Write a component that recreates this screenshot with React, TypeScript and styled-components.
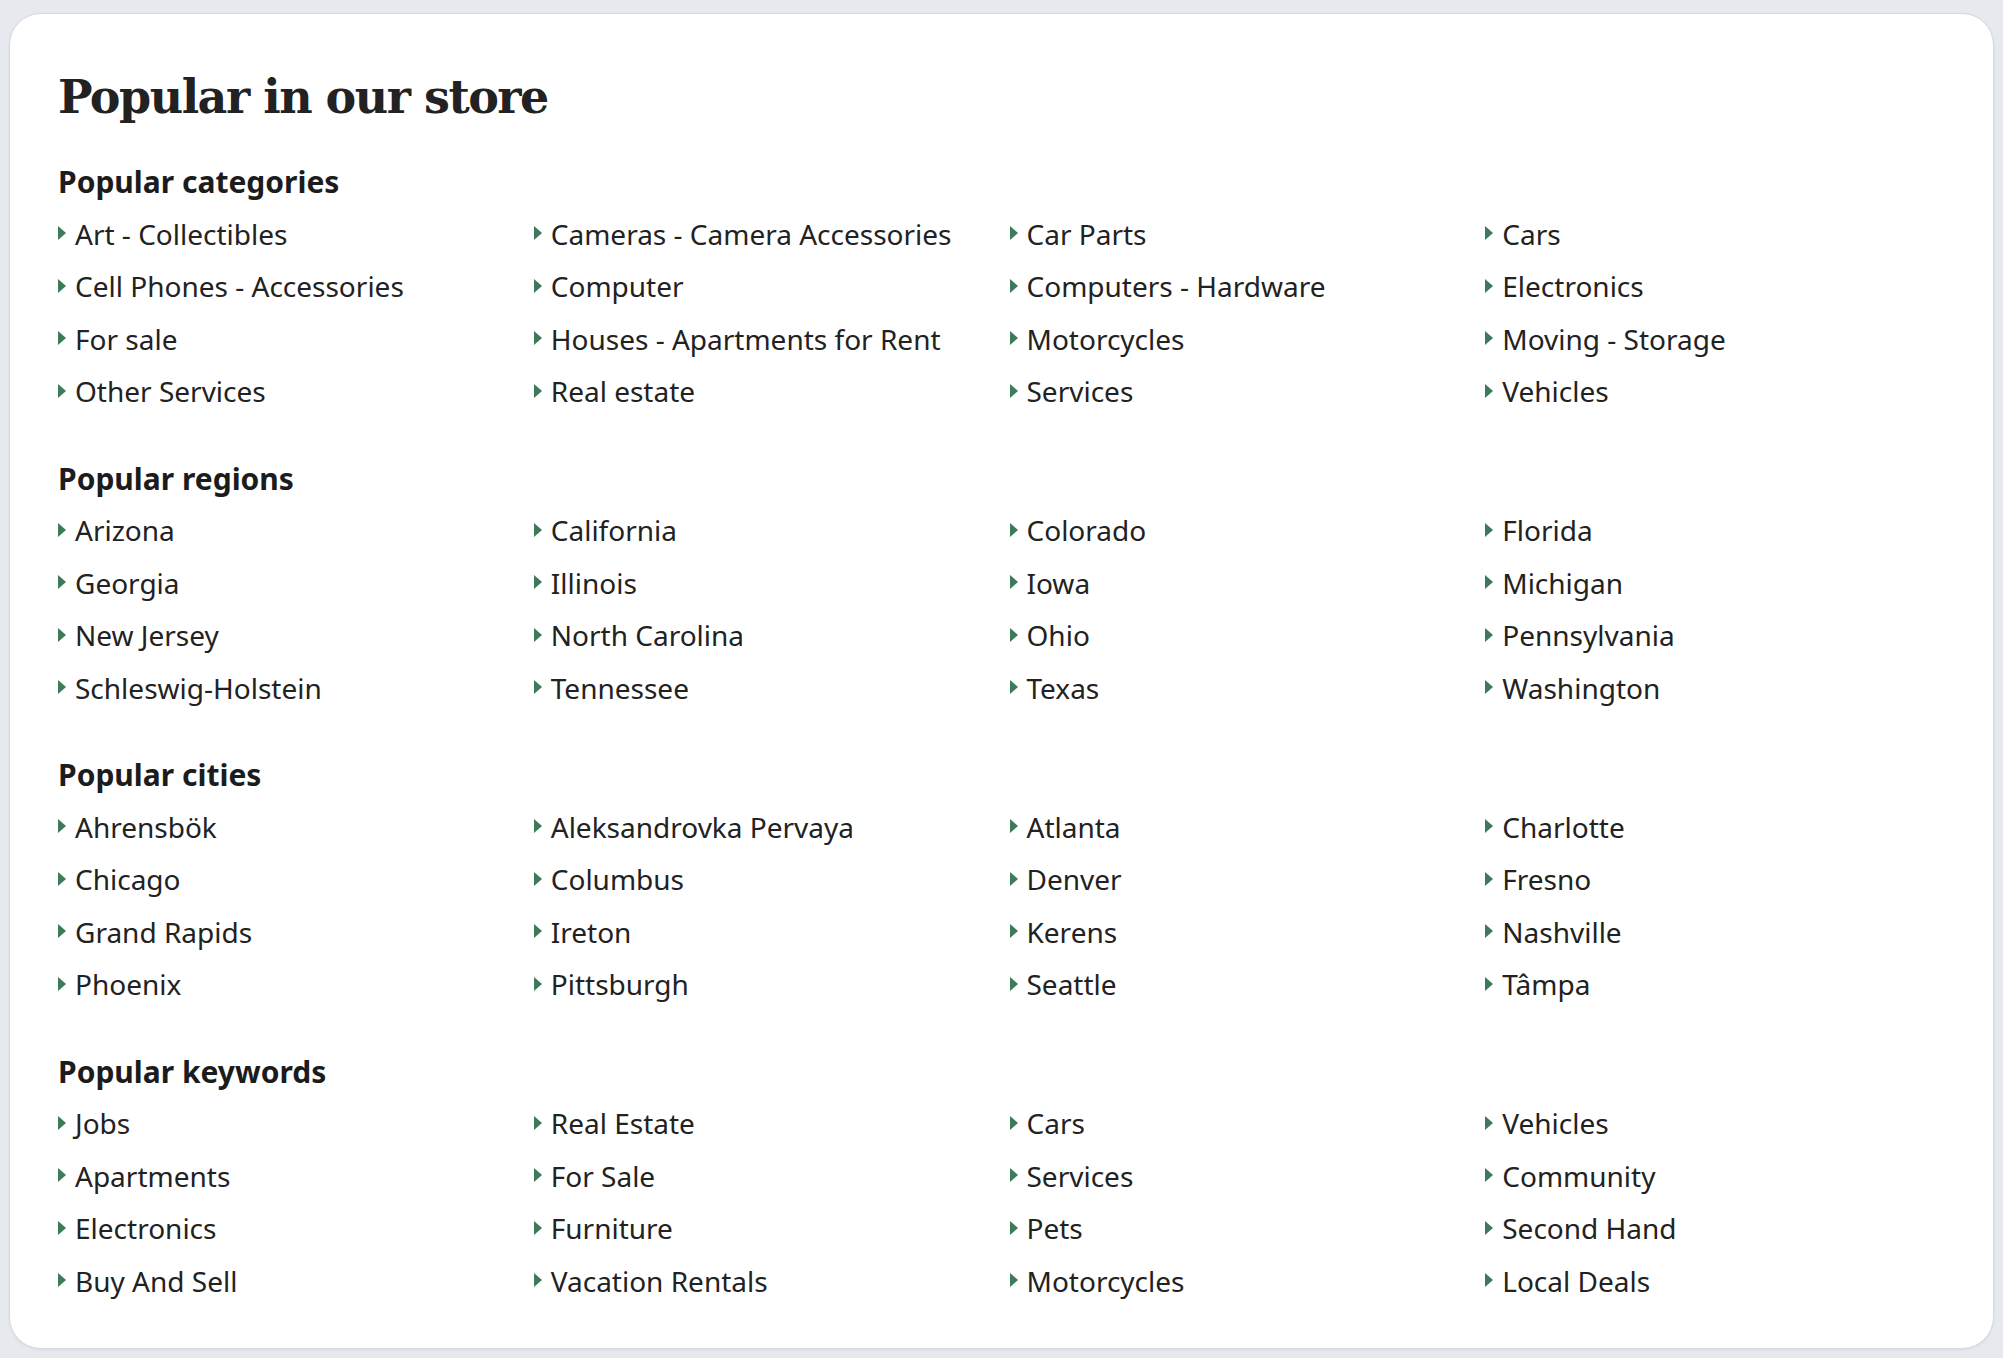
import React from 'react';
import styled, { createGlobalStyle } from 'styled-components';

type GroupType = {
  title: string;
  links: string[];
};

const GROUPS: GroupType[] = [
  {
    title: 'Popular categories',
    links: [
      'Art - Collectibles',
      'Cameras - Camera Accessories',
      'Car Parts',
      'Cars',
      'Cell Phones - Accessories',
      'Computer',
      'Computers - Hardware',
      'Electronics',
      'For sale',
      'Houses - Apartments for Rent',
      'Motorcycles',
      'Moving - Storage',
      'Other Services',
      'Real estate',
      'Services',
      'Vehicles'
    ]
  },
  {
    title: 'Popular regions',
    links: [
      'Arizona',
      'California',
      'Colorado',
      'Florida',
      'Georgia',
      'Illinois',
      'Iowa',
      'Michigan',
      'New Jersey',
      'North Carolina',
      'Ohio',
      'Pennsylvania',
      'Schleswig-Holstein',
      'Tennessee',
      'Texas',
      'Washington'
    ]
  },
  {
    title: 'Popular cities',
    links: [
      'Ahrensbök',
      'Aleksandrovka Pervaya',
      'Atlanta',
      'Charlotte',
      'Chicago',
      'Columbus',
      'Denver',
      'Fresno',
      'Grand Rapids',
      'Ireton',
      'Kerens',
      'Nashville',
      'Phoenix',
      'Pittsburgh',
      'Seattle',
      'Tâmpa'
    ]
  },
  {
    title: 'Popular keywords',
    links: [
      'Jobs',
      'Real Estate',
      'Cars',
      'Vehicles',
      'Apartments',
      'For Sale',
      'Services',
      'Community',
      'Electronics',
      'Furniture',
      'Pets',
      'Second Hand',
      'Buy And Sell',
      'Vacation Rentals',
      'Motorcycles',
      'Local Deals'
    ]
  }
];

const GlobalStyle = createGlobalStyle`
  html, body {
    margin: 0;
    background: #e6e9ee;
  }
  body {
    font-family: 'Noto Sans', 'Open Sans', sans-serif;
    color: #222;
  }
`;

const StyledPage = styled.div`
  padding: 13px 9px 10px 9px;
`;

const StyledCard = styled.section`
  background: #fff;
  border: 1px solid #d6d9de;
  border-radius: 32px;
  box-shadow: 0 1px 3px rgba(0, 0, 0, 0.06);
  padding: 53px 48px 41px;
`;

const StyledTitle = styled.h1`
  font-family: 'DejaVu Serif', 'Liberation Serif', serif;
  font-weight: 700;
  font-size: 46px;
  letter-spacing: -1.5px;
  line-height: 60px;
  color: #222;
  margin: 0 0 35px;
`;

const StyledGroup = styled.div`
  & + & {
    margin-top: 41px;
  }
`;

const StyledHeading = styled.h2`
  font-size: 30px;
  font-weight: 700;
  line-height: 40px;
  color: #1c1c1c;
  margin: 0 0 5.5px;
`;

const StyledGrid = styled.ul`
  list-style: none;
  margin: 0;
  padding: 0;
  display: grid;
  grid-template-columns: repeat(4, 1fr);
  column-gap: 16px;
`;

const StyledItem = styled.li`
  display: flex;
  align-items: center;
  height: 52.5px;
  font-size: 28px;
  color: #222;
  white-space: nowrap;
  cursor: pointer;
  :hover {
    text-decoration: underline;
  }
`;

const StyledCaret = styled.span`
  flex-shrink: 0;
  width: 0;
  height: 0;
  border-top: 7px solid transparent;
  border-bottom: 7px solid transparent;
  border-left: 8px solid #3c7a5a;
  margin-right: 9px;
  margin-top: -1px;
`;

const LinkGroup: React.FC<GroupType> = ({ title, links }) => (
  <StyledGroup>
    <StyledHeading>{title}</StyledHeading>
    <StyledGrid>
      {links.map(label => (
        <StyledItem key={label}>
          <StyledCaret />
          {label}
        </StyledItem>
      ))}
    </StyledGrid>
  </StyledGroup>
);

const App: React.FC = () => (
  <StyledPage>
    <GlobalStyle />
    <StyledCard>
      <StyledTitle>Popular in our store</StyledTitle>
      {GROUPS.map(group => (
        <LinkGroup key={group.title} {...group} />
      ))}
    </StyledCard>
  </StyledPage>
);

export default App;
